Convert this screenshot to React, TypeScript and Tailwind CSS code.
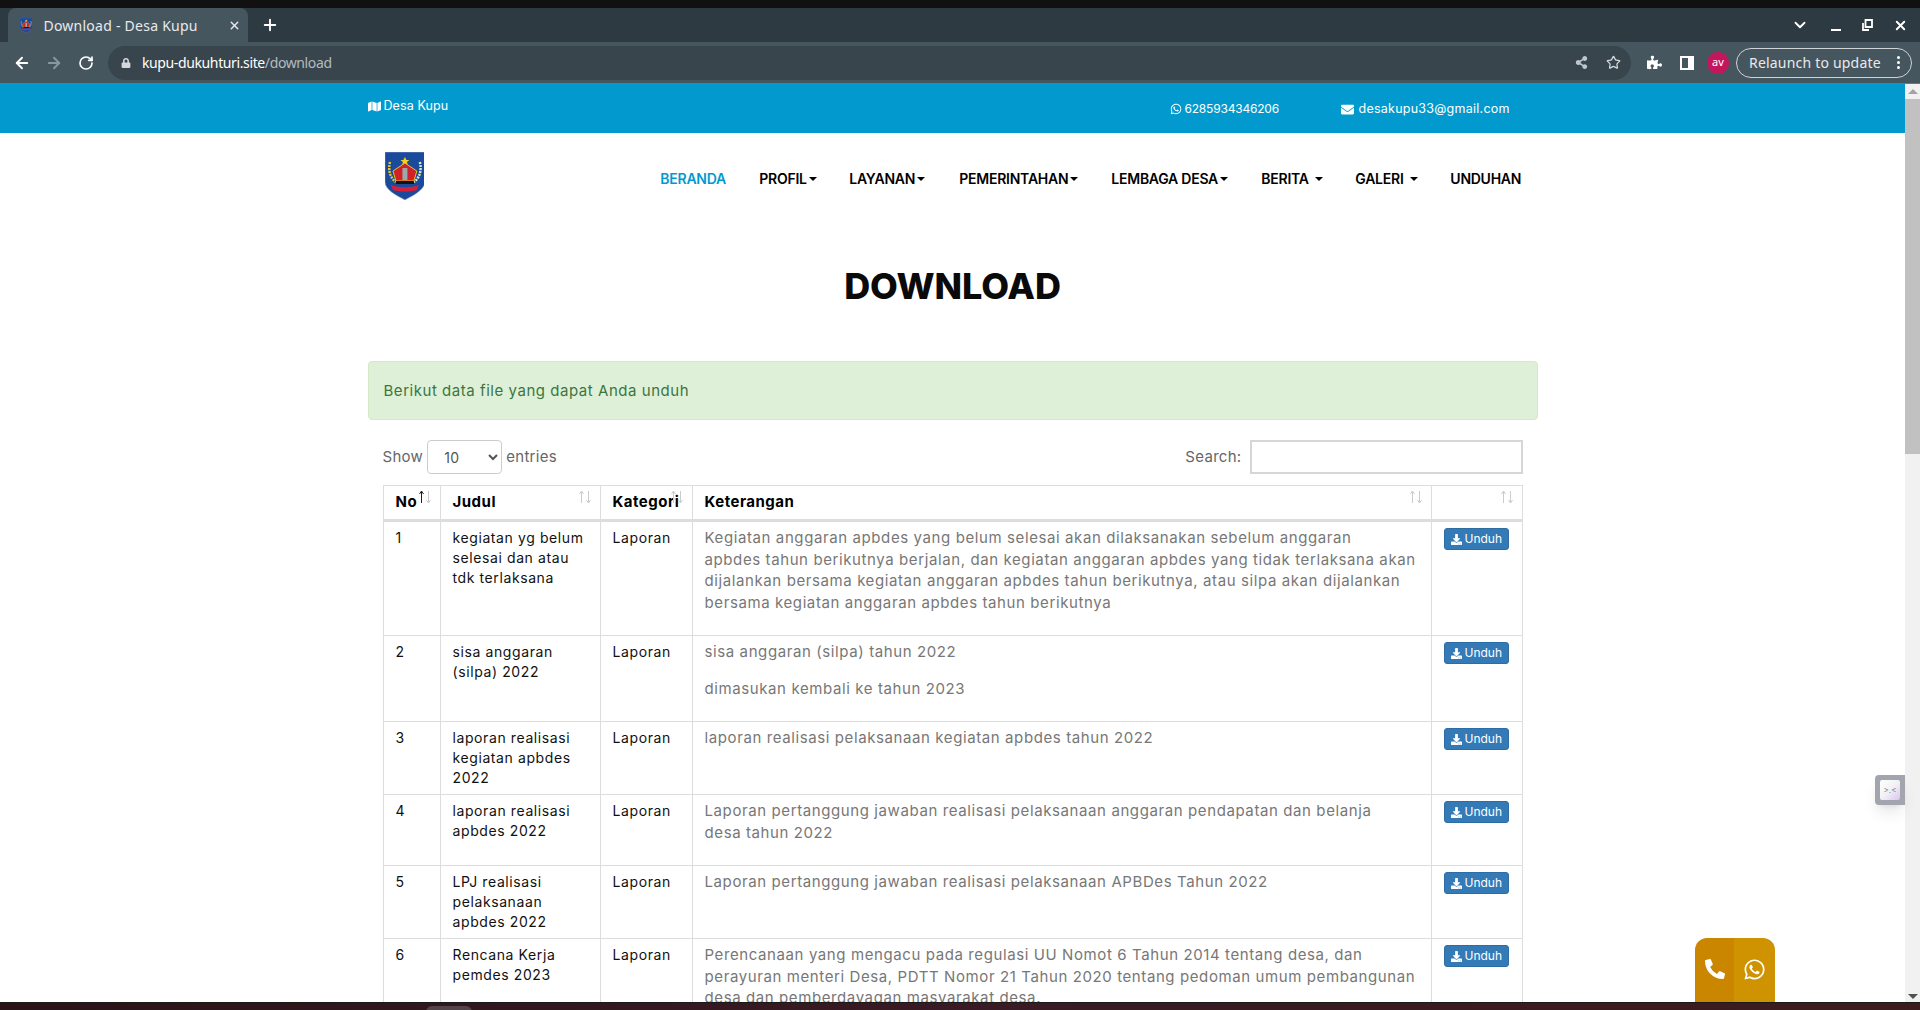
import React from "react";
import { ArrowLeft, ArrowRight, RotateCw, Star, ChevronDown, X, Plus } from "lucide-react";
import { FaMap, FaEnvelope, FaWhatsapp, FaPhoneAlt, FaPuzzlePiece, FaLock, FaDownload, FaShareAlt } from "react-icons/fa";

const Sort = ({ active, className }: { active?: boolean; className: string }) => (
  <svg width="16" height="14" viewBox="0 0 16 14" className={`absolute ${className}`} fill="none" strokeWidth="1">
    <path d="M4.5 13V1.5M2.5 4 4.5 1l2 3" stroke={active ? "#222" : "#ccc"} />
    <path d="M11.5 1v11.5M9.5 10l2 3 2-3" stroke="#ccc" />
  </svg>
);

const Shield = ({ s }: { s: number }) => (
  <svg width={s * 0.83} height={s} viewBox="0 0 40 48">
    <path d="M0 0h40v30c0 8-12 14-20 18C12 44 0 38 0 30z" fill="#1a4a9c" stroke="#9fb0c8" strokeWidth=".5" />
    <path d="M5 10c-2 8 0 16 6 20" stroke="#e6c81e" strokeWidth="2.5" fill="none" strokeDasharray="2 1" />
    <path d="M35 10c2 8 0 16-6 20" stroke="#d5e8d5" strokeWidth="2.5" fill="none" strokeDasharray="2 1" />
    <path d="m20 5 1.5 3h3L22 10l1 3-3-2-3 2 1-3-2.500-2h3z" fill="#f4d21f" />
    <path d="M20 11 32 19l-3 10H11L8 19z" fill="#d2202a" stroke="#e6c81e" strokeWidth="1" />
    <rect x="17.500" y="16" width="5" height="12" fill="#9aa" />
    <rect x="11" y="29" width="18" height="3" fill="#111" />
    <path d="M6 33c8 3 20 3 28 0l-2 5c-7 2-17 2-24 0z" fill="#d81f3a" />
  </svg>
);

const navs: [string, string, boolean, string][] = [
  ["BERANDA", "w-[99px]", false, ""],
  ["PROFIL", "w-[90px]", true, "ml-[2px]"],
  ["LAYANAN", "w-[110px]", true, "ml-[2px]"],
  ["PEMERINTAHAN", "w-[152px]", true, "ml-[2px]"],
  ["LEMBAGA DESA", "w-[150px]", true, "ml-[2px]"],
  ["BERITA", "w-[94px]", true, "ml-[6px]"],
  ["GALERI", "w-[95px]", true, "ml-[6px]"],
  ["UNDUHAN", "w-[71px]", false, ""],
];

const rows: { n: number; j: React.ReactNode; k: React.ReactNode; h: string; second?: React.ReactNode }[] = [
  {
    n: 1,
    j: <>kegiatan yg belum<br />selesai dan atau<br />tdk terlaksana</>,
    k: <>Kegiatan anggaran apbdes yang belum selesai akan dilaksanakan sebelum anggaran<br />apbdes tahun berikutnya berjalan, dan kegiatan anggaran apbdes yang tidak terlaksana akan<br />dijalankan bersama kegiatan anggaran apbdes tahun berikutnya, atau silpa akan dijalankan<br />bersama kegiatan anggaran apbdes tahun berikutnya</>,
    h: "h-[115px]",
  },
  {
    n: 2,
    j: <>sisa anggaran<br />(silpa) 2022</>,
    k: <>sisa anggaran (silpa) tahun 2022</>,
    second: <>dimasukan kembali ke tahun 2023</>,
    h: "h-[86px]",
  },
  {
    n: 3,
    j: <>laporan realisasi<br />kegiatan apbdes<br />2022</>,
    k: <>laporan realisasi pelaksanaan kegiatan apbdes tahun 2022</>,
    h: "h-[73px]",
  },
  {
    n: 4,
    j: <>laporan realisasi<br />apbdes 2022</>,
    k: <>Laporan pertanggung jawaban realisasi pelaksanaan anggaran pendapatan dan belanja<br />desa tahun 2022</>,
    h: "h-[71px]",
  },
  {
    n: 5,
    j: <>LPJ realisasi<br />pelaksanaan<br />apbdes 2022</>,
    k: <>Laporan pertanggung jawaban realisasi pelaksanaan APBDes Tahun 2022</>,
    h: "h-[73px]",
  },
  {
    n: 6,
    j: <>Rencana Kerja<br />pemdes 2023</>,
    k: <>Perencanaan yang mengacu pada regulasi UU Nomot 6 Tahun 2014 tentang desa, dan<br />perayuran menteri Desa, PDTT Nomor 21 Tahun 2020 tentang pedoman umum pembangunan<br />desa dan pemberdayagan masyarakat desa.</>,
    h: "h-[90px]",
  },
];

const td = "border border-[#ddd] align-top px-3 pt-[6px] pb-0 text-[14px] leading-5 text-[#111] tracking-[0.6px]";
const th = "relative border border-[#ddd] border-b-[3px] text-left px-3 text-[15px] font-bold text-black h-[35px] tracking-[0.5px]";

export default function App() {
  return (
    <div className="relative w-[1920px] h-[1010px] overflow-hidden flex flex-col bg-white font-['Inter','Liberation_Sans',sans-serif]">
      <div className="h-2 shrink-0 bg-[#111111]" />

      {/* Tab strip */}
      <div className="h-[34px] shrink-0 bg-[#2e3a41] flex items-end pl-2 pr-3 font-['Noto_Sans','Liberation_Sans',sans-serif]">
        <div className="w-[240px] h-[34px] bg-[#46565f] rounded-t-lg flex items-center pl-3 pr-[7px] text-white">
          <Shield s={15} />
          <span className="ml-[11px] text-[14px] tracking-[0.25px] text-[#e8eaed] flex-1">Download - Desa Kupu</span>
          <X size={13} className="text-[#e8eaed]" strokeWidth={2.5} />
        </div>
        <Plus size={18} strokeWidth={2.5} className="text-white ml-[13px] mb-2" />
        <div className="ml-auto flex items-center text-white mb-2 pr-0">
          <ChevronDown size={18} strokeWidth={2.5} />
          <div className="ml-[22px] w-[10px] h-[2px] bg-white translate-y-[5px]" />
          <svg width="11" height="12" viewBox="0 0 11 12" className="ml-[21px]" fill="none" stroke="#fff" strokeWidth="1.8">
            <path d="M3.500 1h6.500v7H3.500zM1 4v7h6" />
          </svg>
          <X size={15} strokeWidth={3} className="ml-[20px]" />
        </div>
      </div>

      {/* Toolbar */}
      <div className="h-[42px] shrink-0 bg-[#46565f] border-b border-[#5d7a8a] flex items-center pl-[13px] pr-2 font-['Noto_Sans','Liberation_Sans',sans-serif]">
        <ArrowLeft size={18} strokeWidth={2.5} className="text-white" />
        <ArrowRight size={18} strokeWidth={2.5} className="text-[#8b979e] ml-[14px]" />
        <RotateCw size={16} strokeWidth={2.5} className="text-white ml-[15px]" />
        <div className="ml-[14px] w-[1523px] h-[34px] rounded-full bg-[#38454d] flex items-center pl-[13px] pr-[10px]">
          <FaLock size={10} className="text-[#d5d9dc]" />
          <span className="ml-[11px] text-[14px] tracking-[-0.38px] text-white">kupu-dukuhturi.site<span className="text-[#b4bbc0]">/download</span></span>
          <FaShareAlt size={13} className="ml-auto text-[#c0c6ca]" />
          <Star size={15} className="ml-[18px] text-[#d5d9dc]" />
        </div>
        <FaPuzzlePiece size={15} className="ml-[16px] text-white" />
        <div className="ml-[18px] w-[14px] h-[14px] border-[2px] border-white border-r-[6px]" />
        <div className="ml-[13px] w-[22px] h-[22px] rounded-full bg-[#c2185b] text-white text-[11px] flex items-center justify-center">av</div>
        <div className="ml-[7px] w-[176px] h-[30px] rounded-full border border-[#cfd4d7] text-[#e8eaed] text-[14px] tracking-[0.2px] flex items-center pl-[12px] pr-[11px]">
          Relaunch to update
          <span className="ml-auto flex flex-col gap-[2px]">
            <i className="block w-[3px] h-[3px] rounded-full bg-white" />
            <i className="block w-[3px] h-[3px] rounded-full bg-white" />
            <i className="block w-[3px] h-[3px] rounded-full bg-white" />
          </span>
        </div>
      </div>

      {/* Page */}
      <div className="flex-1 min-h-0 flex">
        <div className="flex-1 min-w-0 overflow-hidden">
          <div className="h-[49px] bg-[#029ace] text-white text-[12.500px] whitespace-nowrap">
            <div className="w-[1170px] mx-auto flex h-full">
              <div className="w-[802px] flex items-center gap-[3px] h-[44px] tracking-[0.1px]"><FaMap size={13} /> Desa Kupu</div>
              <div className="w-[171px] flex items-center gap-[3px] h-full text-[12px] tracking-[-0.2px]"><FaWhatsapp size={12} /> 6285934346206</div>
              <div className="flex items-center gap-[5px] h-[50px] tracking-[0.25px]"><FaEnvelope size={13} /> desakupu33@gmail.com</div>
            </div>
          </div>

          <div className="w-[1170px] mx-auto">
            <div className="h-[75px] flex items-start">
              <div className="ml-[17px] mt-[19px]"><Shield s={48} /></div>
              <nav className="ml-[236px] mt-[36px] flex text-[14px] font-semibold text-black leading-5 tracking-[-0.25px]">
                {navs.map(([t, w, c, m], i) => (
                  <div key={t} className={`${w} flex items-center whitespace-nowrap ${i === 0 ? "text-[#029ace]" : ""}`}>
                    {t}
                    {c && <span className={`${m} w-0 h-0 border-x-4 border-x-transparent border-t-4 border-t-black`} />}
                  </div>
                ))}
              </nav>
            </div>

            <h1 className="text-center text-[36px] font-extrabold text-[#0a0a0a] leading-[40px] mt-[58px] mb-[55px] tracking-[-0.1px]">DOWNLOAD</h1>

            <div className="h-[59px] pt-[2px] border border-[#d6e9c6] bg-[#dff0d8] rounded text-[#3c763d] text-[15px] tracking-[0.54px] flex items-center px-[15px]">
              Berikut data file yang dapat Anda unduh
            </div>

            <div className="px-[15px] pt-5">
              <div className="flex items-center h-[34px] text-[15px] text-[#666] tracking-[0.3px]">
                Show
                <span className="relative ml-[4px] mr-1">
                  <select defaultValue="10" className="block w-[75px] h-[34px] border border-[#ccc] rounded pl-[12px] text-[#555] text-[14px] bg-white">
                    <option>10</option>
                  </select>
                </span>
                entries
                <span className="ml-auto">Search:</span>
                <input className="ml-2 w-[273px] h-[34px] border-2 border-[#ccc]/80 bg-white" />
              </div>

              <table className="mt-[11px] w-[1139px] table-fixed border-collapse">
                <colgroup>
                  <col className="w-[57px]" />
                  <col className="w-[160px]" />
                  <col className="w-[92px]" />
                  <col className="w-[739px]" />
                  <col className="w-[91px]" />
                </colgroup>
                <thead>
                  <tr>
                    <th className={th}>No<Sort active className="right-[7px] top-[4px]" /></th>
                    <th className={th}>Judul<Sort className="right-[7px] top-[4px]" /></th>
                    <th className={th}>Kategori<Sort className="right-[7px] top-[4px]" /></th>
                    <th className={th}>Keterangan<Sort className="right-[7px] top-[4px]" /></th>
                    <th className={th}><Sort className="right-[7px] top-[4px]" /></th>
                  </tr>
                </thead>
                <tbody>
                  {rows.map((r) => (
                    <tr key={r.n} className={r.h}>
                      <td className={td}>{r.n}</td>
                      <td className={td}>{r.j}</td>
                      <td className={td}>Laporan</td>
                      <td className={`${td} !pt-[5px] !text-[15px] !leading-[21.500px] !text-[#777] !tracking-[0.6px] whitespace-nowrap`}>
                        <p>{r.k}</p>
                        {r.second && <p className="mt-[15px]">{r.second}</p>}
                      </td>
                      <td className={td}>
                        <span className="inline-flex items-center gap-[3px] h-[22px] px-[6px] rounded-[3px] bg-[#337ab7] border border-[#2e6da4] text-white text-[12px] leading-[18px] tracking-normal">
                          <FaDownload size={11} /> Unduh
                        </span>
                      </td>
                    </tr>
                  ))}
                </tbody>
              </table>
            </div>
          </div>
        </div>

        {/* Scrollbar */}
        <div className="w-[15px] shrink-0 bg-[#f1f1f1] flex flex-col items-center">
          <div className="mt-[5px] w-0 h-0 border-x-[5px] border-x-transparent border-b-[5px] border-b-[#a3a3a3]" />
          <div className="mt-[5px] w-[15px] h-[355px] bg-[#c1c1c1]" />
          <div className="mt-auto mb-[3px] w-0 h-0 border-x-[5px] border-x-transparent border-t-[5px] border-t-[#505050]" />
        </div>
      </div>

      <div className="relative h-2 shrink-0 bg-gradient-to-r from-[#2a1418] via-[#3a1a24] to-[#3c1c1c] border-t border-[#1a1a1a]">
        <div className="absolute left-[426px] top-[3px] w-[46px] h-[6px] rounded-t-full bg-[#55434a]" />
      </div>

      {/* Side widget */}
      <div className="absolute left-[1875px] top-[775px] w-[30px] h-[30px] rounded-l bg-[#a3a5ae] shadow-lg flex items-center justify-end pr-[5px]">
        <div className="w-5 h-5 rounded-[2px] bg-gradient-to-br from-white via-[#f2f2f6] to-[#dcc4f0] text-[#777] text-[8px] leading-5 text-center">&gt;.&lt;</div>
      </div>

      {/* Floating contact */}
      <div className="absolute left-[1695px] top-[938px] w-[80px] h-[64px] rounded-t-[12px] overflow-hidden flex text-white">
        <div className="w-[39px] bg-[#cb8600] flex justify-center pt-[21px]"><FaPhoneAlt size={20} /></div>
        <div className="flex-1 bg-[#cf9200] flex justify-center pt-[20px]"><FaWhatsapp size={23} /></div>
      </div>
    </div>
  );
}
